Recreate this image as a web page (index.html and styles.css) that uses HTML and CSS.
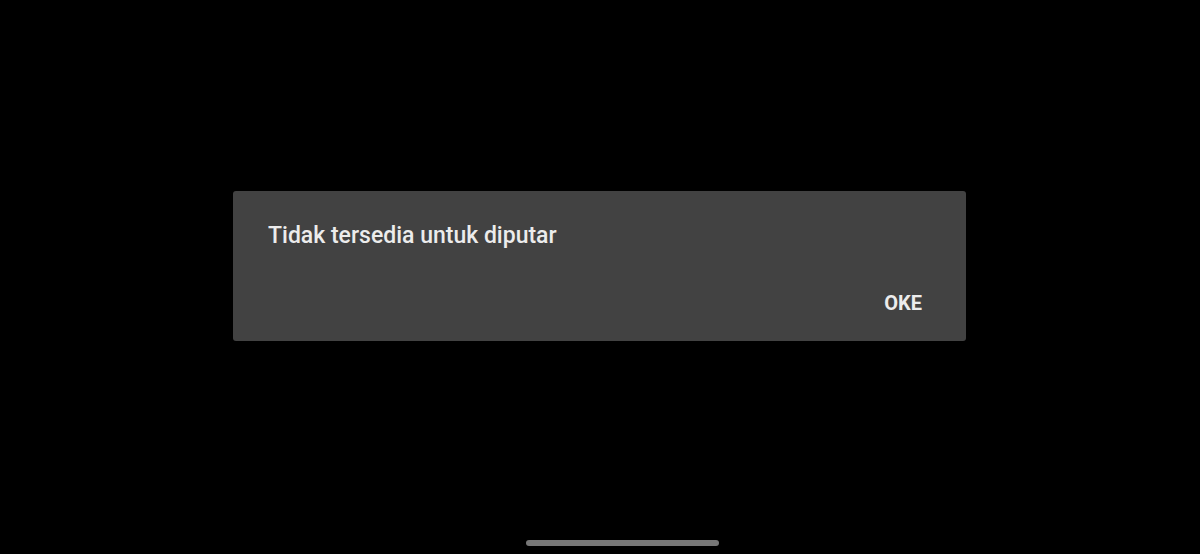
FILE: index.html
```html
<!DOCTYPE html>
<html>
<head>
<meta charset="utf-8">
<link rel="stylesheet" href="styles.css">
</head>
<body>
<div class="screen">
  <div class="stage">
    <div class="dialog">
      <div class="title">Tidak tersedia untuk diputar</div>
      <div class="actions"><span class="btn">OKE</span></div>
    </div>
  </div>
  <div class="navbar"><div class="handle"></div></div>
</div>
</body>
</html>
```
FILE: styles.css
```css
html, body {
  margin: 0;
  padding: 0;
  background: #000;
}
.screen {
  width: 1200px;
  height: 554px;
  display: flex;
  flex-direction: column;
  font-family: Roboto, "Noto Sans", sans-serif;
}
.stage {
  flex: 1;
  padding-top: 191px;
  padding-left: 233px;
}
.dialog {
  width: 733px;
  height: 150px;
  box-sizing: border-box;
  background: #424242;
  border-radius: 3px;
  padding: 0 44px 0 35px;
  display: flex;
  flex-direction: column;
}
.title {
  margin-top: 31px;
  font-size: 23px;
  line-height: 27px;
  font-weight: 500;
  color: #ececec;
}
.actions {
  margin-top: 42px;
  display: flex;
  justify-content: flex-end;
}
.btn {
  font-size: 20px;
  line-height: 24px;
  font-weight: 700;
  color: #ececec;
}
.navbar {
  height: 14px;
  padding-left: 526px;
}
.handle {
  width: 193px;
  height: 6px;
  border-radius: 3px;
  background: #777;
}
```
